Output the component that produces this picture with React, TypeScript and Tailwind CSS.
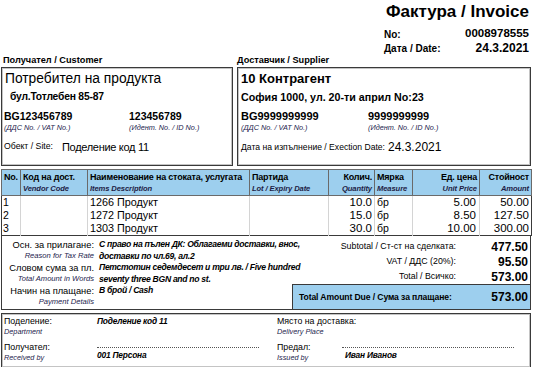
const font = "font-['Liberation_Sans',Arial,sans-serif]";

const items = [
  { no: "1", name: "1266 Продукт", qty: "10.0", unit: "бр", price: "5.00", amount: "50.00" },
  { no: "2", name: "1272 Продукт", qty: "15.0", unit: "бр", price: "8.50", amount: "127.50" },
  { no: "3", name: "1303 Продукт", qty: "30.0", unit: "бр", price: "10.00", amount: "300.00" },
];

function Sub({ children }: { children: React.ReactNode }) {
  return <div className="text-[7.3px] italic leading-[9px] text-[#23234d] whitespace-nowrap">{children}</div>;
}

function Head({ top, sub, right }: { top: string; sub?: string; right?: boolean }) {
  return (
    <th
      className={`border border-[#6a6a6a] px-[2px] pt-[1px] align-top font-normal whitespace-nowrap ${right ? "text-right" : "text-left"}`}
    >
      <div className="text-[9px] font-bold leading-[12px] tracking-[-0.2px]">{top}</div>
      <div className="text-[7.6px] font-bold italic leading-[11px] text-[#1d1d45] tracking-[-0.1px]">{sub ?? "\u00a0"}</div>
    </th>
  );
}

export default function App() {
  return (
    <div className={`w-[533px] h-[367px] overflow-hidden bg-white text-black ${font}`}>
      <div className="w-[530px] ml-[1px]">
        {/* title + number/date */}
        <div className="flex flex-col items-end pr-[2px]">
          <div className="text-[17px] font-bold leading-[22px] mt-[1px]">Фактура / Invoice</div>
          <div className="w-[145px] mt-[4px] text-[10px]">
            <div className="flex justify-between items-center h-[14px]">
              <span className="font-bold">No:</span>
              <span className="text-[11.5px] font-semibold">0008978555</span>
            </div>
            <div className="flex justify-between items-center h-[14px]">
              <span className="font-bold">Дата / Date:</span>
              <span className="text-[12px] font-bold">24.3.2021</span>
            </div>
          </div>
        </div>

        <div className="flex h-[12px] items-center text-[9.2px] font-bold whitespace-nowrap">
          <div className="w-[236px] pl-[2px]">Получател / Customer</div>
          <div>Доставчик / Supplier</div>
        </div>

        {/* customer / supplier boxes */}
        <div className="flex gap-[4px] h-[99px] whitespace-nowrap">
          <div className="w-[232px] border border-[#3a3a3a] shadow-[inset_0_0_0_1px_#c4c4c4] px-[2px]">
            <div className="text-[13.8px] leading-[18px] pt-[2px] pl-[1px]">Потребител на продукта</div>
            <div className="text-[10.3px] font-bold leading-[14px] mt-[2px] pl-[6px] tracking-[-0.2px]">бул.Тотлебен 85-87</div>
            <div className="grid grid-cols-[125px_1fr] mt-[6px]">
              <div>
                <div className="text-[10.5px] font-bold leading-[13px]">BG123456789</div>
                <Sub>(ДДС No. / VAT No.)</Sub>
              </div>
              <div>
                <div className="text-[10.5px] font-bold leading-[13px]">123456789</div>
                <Sub>(Идент. No. / ID No.)</Sub>
              </div>
            </div>
            <div className="flex items-center h-[14px] mt-[8px] gap-[9px]">
              <span className="text-[8.7px]">Обект / Site:</span>
              <span className="text-[11px] tracking-[-0.3px]">Поделение код 11</span>
            </div>
          </div>
          <div className="flex-1 border border-[#3a3a3a] shadow-[inset_0_0_0_1px_#c4c4c4] px-[3px]">
            <div className="text-[13px] font-bold leading-[18px] pt-[2px]">10 Контрагент</div>
            <div className="text-[10.7px] font-bold leading-[14px] mt-[2px]">София 1000, ул. 20-ти април No:23</div>
            <div className="grid grid-cols-[127px_1fr] mt-[6px]">
              <div>
                <div className="text-[11px] font-bold leading-[13px]">BG9999999999</div>
                <Sub>(ДДС No. / VAT No.)</Sub>
              </div>
              <div>
                <div className="text-[11px] font-bold leading-[13px]">9999999999</div>
                <Sub>(Идент. No. / ID No.)</Sub>
              </div>
            </div>
            <div className="flex items-center h-[14px] mt-[8px] gap-[3px]">
              <span className="text-[8.6px]">Дата на изпълнение / Exection Date:</span>
              <span className="text-[12px]">24.3.2021</span>
            </div>
          </div>
        </div>

        {/* items table */}
        <table className="mt-[3px] w-[530px] table-fixed border-collapse border border-[#3a3a3a]">
          <colgroup>
            <col className="w-[19px]" />
            <col className="w-[67px]" />
            <col className="w-[162px]" />
            <col className="w-[79px]" />
            <col className="w-[46px]" />
            <col className="w-[38px]" />
            <col className="w-[67px]" />
            <col className="w-[52px]" />
          </colgroup>
          <thead className="bg-[#9dcfee]">
            <tr className="h-[26px]">
              <Head top="No." />
              <Head top="Код на дост." sub="Vendor Code" />
              <Head top="Наименование на стоката, услугата" sub="Items Description" />
              <Head top="Партида" sub="Lot / Expiry Date" />
              <Head top="Колич." sub="Quantity" right />
              <Head top="Мярка" sub="Measure" />
              <Head top="Ед. цена" sub="Unit Price" right />
              <Head top="Стойност" sub="Amount" right />
            </tr>
          </thead>
          <tbody className="leading-[13px] whitespace-nowrap">
            {items.map((it) => (
              <tr key={it.no} className="h-[13px]">
                <td className="border-r border-[#d4d4d4] pl-[1px] text-[10.5px]">{it.no}</td>
                <td className="border-r border-[#d4d4d4]"></td>
                <td className="border-r border-[#d4d4d4] pl-[2px] text-[10.8px]">{it.name}</td>
                <td className="border-r border-[#d4d4d4]"></td>
                <td className="border-r border-[#d4d4d4] text-right pr-[2px] text-[11.5px]">{it.qty}</td>
                <td className="border-r border-[#d4d4d4] pl-[2px] text-[10.5px]">{it.unit}</td>
                <td className="border-r border-[#d4d4d4] text-right pr-[3px] text-[11.5px]">{it.price}</td>
                <td className="text-right pr-[2px] text-[11.5px]">{it.amount}</td>
              </tr>
            ))}
          </tbody>
        </table>

        {/* notes + totals */}
        <div className="flex h-[74px] border-x border-b border-[#3a3a3a] whitespace-nowrap">
          <div className="flex-1 min-w-0 pt-[3px]">
            {[
              {
                label: "Осн. за прилагане:",
                sub: "Reason for Tax Rate",
                value: (
                  <>
                    С право на пълен ДК: Облагаеми доставки, внос,
                    <br />
                    доставки по чл.69, ал.2
                  </>
                ),
              },
              {
                label: "Словом сума за пл.",
                sub: "Total Amount in Words",
                value: (
                  <>
                    Петстотин седемдесет и три лв. / Five hundred
                    <br />
                    seventy three BGN and no st.
                  </>
                ),
              },
              { label: "Начин на плащане:", sub: "Payment Details", value: <>В брой / Cash</> },
            ].map((row) => (
              <div key={row.sub} className="grid grid-cols-[92px_1fr] gap-x-[5px] h-[23px]">
                <div className="text-right">
                  <div className="text-[9.3px] leading-[12px]">{row.label}</div>
                  <div className="text-[7.6px] italic leading-[10px] text-[#23234d]">{row.sub}</div>
                </div>
                <div className="text-[8.6px] font-bold italic leading-[11.5px] tracking-[-0.3px]">{row.value}</div>
              </div>
            ))}
          </div>
          <div className="w-[238px] shrink-0 flex flex-col">
            <div className="pt-[2px] pr-[2px]">
              {[
                ["Subtotal / Ст-ст на сделката:", "477.50"],
                ["VAT / ДДС (20%):", "95.50"],
                ["Total / Всичко:", "573.00"],
              ].map(([l, v]) => (
                <div key={l} className="grid grid-cols-[1fr_72px] items-center h-[15px]">
                  <span className="text-right text-[8.8px]">{l}</span>
                  <span className="text-right text-[12px] font-bold">{v}</span>
                </div>
              ))}
            </div>
            <div className="mt-auto h-[25px] bg-[#9dcfee] border-l border-t border-[#3a3a3a] flex items-center justify-between pl-[6px] pr-[2px]">
              <span className="text-[8.6px] font-bold tracking-[-0.1px]">Total Amount Due / Сума за плащане:</span>
              <span className="text-[12px] font-bold">573.00</span>
            </div>
          </div>
        </div>

        {/* footer */}
        <div className="mt-[3px] h-[55px] border border-[#3a3a3a] shadow-[inset_0_0_0_1px_#c4c4c4] grid grid-cols-[273px_1fr] px-[2px] pt-[2px] whitespace-nowrap">
          <div className="grid grid-cols-[93px_1fr] grid-rows-[26px_1fr]">
            <div>
              <div className="text-[8.8px] leading-[11px]">Поделение:</div>
              <Sub>Department</Sub>
            </div>
            <div className="text-[8.4px] font-bold italic leading-[11px] tracking-[-0.2px]">Поделение код 11</div>
            <div>
              <div className="text-[8.8px] leading-[11px]">Получател:</div>
              <Sub>Received by</Sub>
            </div>
            <div className="pt-[5px]">
              <div className="w-[162px] border-t border-dotted border-[#555]"></div>
              <div className="text-[8.4px] font-bold italic leading-[11px] mt-[2px] tracking-[-0.2px]">001 Персона</div>
            </div>
          </div>
          <div className="grid grid-cols-[65px_1fr] grid-rows-[26px_1fr]">
            <div>
              <div className="text-[8.8px] leading-[11px]">Място на доставка:</div>
              <Sub>Delivery Place</Sub>
            </div>
            <div></div>
            <div>
              <div className="text-[8.8px] leading-[11px]">Предал:</div>
              <Sub>Issued by</Sub>
            </div>
            <div className="pt-[5px]">
              <div className="w-[172px] border-t border-dotted border-[#555]"></div>
              <div className="text-[8.4px] font-bold italic leading-[11px] mt-[2px] pl-[3px] tracking-[-0.2px]">Иван Иванов</div>
            </div>
          </div>
        </div>
      </div>
    </div>
  );
}
